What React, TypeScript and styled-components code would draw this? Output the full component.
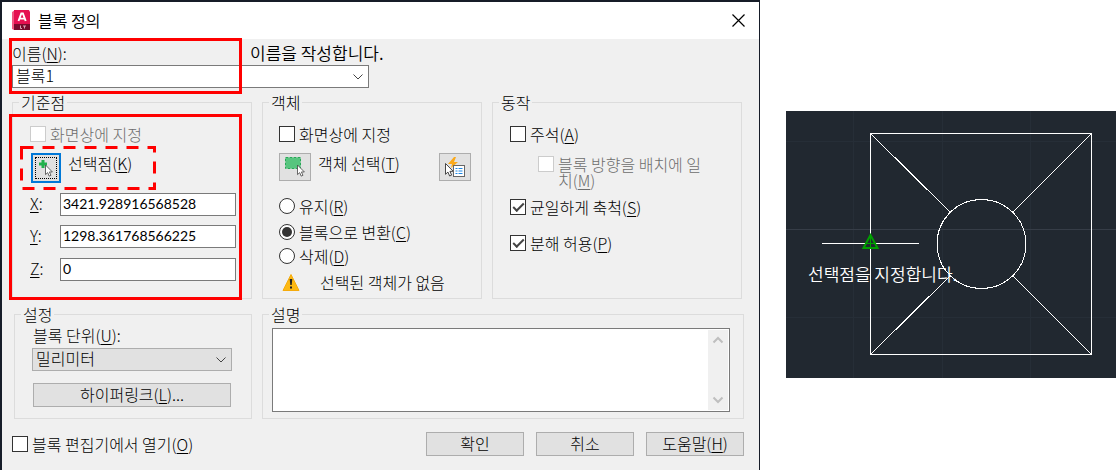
import React from 'react';
import styled, { createGlobalStyle, css } from 'styled-components';

const GlobalStyle = createGlobalStyle`
  *, *::before, *::after { box-sizing: border-box; }
  body {
    margin: 0;
    background: #fff;
    color: #000;
    font: 300 16px/18px "Noto Sans CJK KR", sans-serif;
  }
  button, input, select, textarea { font: inherit; color: inherit; margin: 0; border-radius: 0; }
  u { text-underline-offset: 2px; text-decoration-thickness: 1px; }
`;

const Page = styled.main`
  display: grid;
  grid-template-columns: minmax(760px, 1fr) 330px;
  column-gap: 26px;
  min-height: 100vh;
`;

const Dialog = styled.section`
  display: flex;
  flex-direction: column;
  background: #f0f0f0;
  border: solid #161c28;
  border-width: 2px 1px 0 2px;
`;

const TitleBar = styled.header`
  display: flex;
  align-items: center;
  gap: 6px;
  height: 37px;
  padding: 0 12px 1px 10px;
  background: #fff;
`;

const Title = styled.h1`
  flex: 1;
  margin: 0;
  font-size: 16px;
  font-weight: 350;
`;

const CloseButton = styled.button`
  display: flex;
  padding: 2px;
  border: 0;
  background: none;
`;

const Body = styled.form`
  position: relative;
  display: flex;
  flex-direction: column;
  padding: 5px 15px 14px 10px;
`;

const NameRow = styled.div`
  display: flex;
  align-items: flex-start;
  height: 21px;
`;

const NameLabel = styled.label`
  width: 238px;
`;

const Note = styled.p`
  margin: 0;
  font-size: 17px;
  font-weight: 350;
`;

const SelectBox = styled.div<{ $filled?: boolean }>`
  display: grid;
  align-items: center;
  width: ${p => (p.$filled ? '200px' : '357px')};
  height: 23px;
  border: 1px solid ${p => (p.$filled ? '#adadad' : '#7a7a7a')};
  background: ${p => (p.$filled ? '#e1e1e1' : '#fff')};
  > * { grid-area: 1 / 1; }
  > svg { justify-self: end; margin-right: 4px; pointer-events: none; }
`;

const Select = styled.select`
  appearance: none;
  width: 100%;
  height: 21px;
  padding: 0 24px 3px 3px;
  border: 0;
  background: none;
  line-height: 18px;
`;

const TopGroups = styled.div`
  display: grid;
  grid-template-columns: 240fr 220fr 250fr;
  gap: 10px;
  margin: 5px 2px 6px 0;
`;

const BottomGroups = styled.div`
  display: grid;
  grid-template-columns: 238fr 482fr;
  gap: 10px;
  margin-left: 2px;
`;

const Group = styled.fieldset<{ $inset: number }>`
  min-width: 0;
  margin: 0;
  padding: 0 10px 6px ${p => p.$inset}px;
  border: 1px solid #dcdcdc;
`;

const Legend = styled.legend<{ $inset: number }>`
  margin-left: ${p => 6 - p.$inset}px;
  padding: 0 2px;
`;

const Line = styled.div<{ $top?: number; $height?: number; $indent?: number }>`
  display: flex;
  align-items: center;
  height: ${p => p.$height ?? 16}px;
  margin-top: ${p => p.$top ?? 0}px;
  padding-left: ${p => p.$indent ?? 0}px;
`;

const Choice = styled.label<{ $disabled?: boolean }>`
  display: flex;
  align-items: flex-start;
  gap: 4px;
  line-height: 16px;
  color: ${p => (p.$disabled ? '#6d6d6d' : '#000')};
`;

const WrappedText = styled.span`
  width: 150px;
`;

const markStyle = css`
  appearance: none;
  flex: none;
  display: grid;
  place-items: center;
  width: 16px;
  height: 16px;
  border: 1px solid #333;
  background: #fff;
`;

const CheckInput = styled.input.attrs({ type: 'checkbox' })`
  ${markStyle}
  &:disabled { border-color: #ccc; }
  &:checked::before {
    content: '';
    width: 11px;
    height: 6px;
    margin-bottom: 3px;
    border: solid #444;
    border-width: 0 0 2px 2px;
    transform: rotate(-45deg);
  }
`;

const RadioInput = styled.input.attrs({ type: 'radio' })`
  ${markStyle}
  && { border-radius: 50%; }
  &:checked::before {
    content: '';
    width: 10px;
    height: 10px;
    border-radius: 50%;
    background: #333;
  }
`;

const ToolButton = styled.button<{ $focused?: boolean }>`
  position: relative;
  display: grid;
  place-items: center;
  flex: none;
  width: ${p => (p.$focused ? 30 : 32)}px;
  height: ${p => (p.$focused ? 30 : 28)}px;
  margin-left: ${p => (p.$focused ? 1 : 0)}px;
  padding: 0;
  border: ${p => (p.$focused ? '2px solid #0078d7' : '1px solid #adadad')};
  background: #e1e1e1;
  ${p => p.$focused && css`
    &::after {
      content: '';
      position: absolute;
      inset: 2px;
      border: 1px dotted #000;
    }
  `}
`;

const ToolLabel = styled.label`
  flex: 1;
  align-self: flex-start;
  padding: 1px 0 0 7px;
`;

const AxisLabel = styled.label`
  width: 30px;
  padding-bottom: 3px;
`;

const AxisInput = styled.input`
  width: 176px;
  height: 23px;
  padding: 0 2px 2px;
  border: 1px solid #7a7a7a;
  background: #fff;
  font: 400 14px/18px Lato, sans-serif;
`;

const Status = styled.span`
  margin-left: 20px;
  padding-bottom: 2px;
`;

const FieldLabel = styled.label`
  display: block;
  margin: 3px 0 4px 1px;
`;

const PushButton = styled.button<{ $wide?: boolean }>`
  width: ${p => (p.$wide ? 198 : 98)}px;
  height: 24px;
  padding: 0 0 2px;
  border: 1px solid #adadad;
  background: #e1e1e1;
  line-height: 18px;
`;

const HyperlinkRow = styled.div`
  display: flex;
  margin: 12px 0 4px 1px;
`;

const MemoFrame = styled.div`
  display: flex;
  height: 84px;
  margin: 5px 3px 0 0;
  padding: 1px;
  border: 1px solid #7a7a7a;
  background: #fff;
`;

const Memo = styled.textarea`
  flex: 1;
  min-width: 0;
  padding: 2px;
  border: 0;
  resize: none;
  overflow: hidden;
  background: #fff;
`;

const ScrollTrack = styled.div`
  display: flex;
  flex-direction: column;
  justify-content: space-between;
  align-items: center;
  width: 20px;
  padding: 6px 0;
  background: #f0f0f0;
`;

const ScrollButton = styled.button`
  display: flex;
  padding: 0;
  border: 0;
  background: none;
`;

const Footer = styled.footer`
  display: flex;
  align-items: center;
  gap: 12px;
  margin-top: 13px;
`;

const FooterChoice = styled.div`
  flex: 1;
`;

const Highlight = styled.div<{ $top: number; $height: number }>`
  position: absolute;
  left: 7px;
  top: ${p => p.$top}px;
  width: 233px;
  height: ${p => p.$height}px;
  border: 3px solid #f00;
  pointer-events: none;
`;

const DashedHighlight = styled.svg`
  position: absolute;
  left: 18px;
  top: 107px;
  pointer-events: none;
`;

const Drawing = styled.figure`
  position: relative;
  align-self: start;
  margin: 111px 0 0;
  background: #212830;
  > svg { display: block; }
`;

const Caption = styled.figcaption`
  position: absolute;
  left: 22px;
  top: 154px;
  color: #fff;
  font-size: 17px;
  font-weight: 350;
`;

const Chevron = ({ color = '#444', up = false, width = 1 }: { color?: string; up?: boolean; width?: number }) => (
  <svg width="12" height="8" viewBox="0 0 12 8" fill="none" stroke={color} strokeWidth={width} aria-hidden="true">
    <path d={up ? 'M1.5 6.5 6 2l4.5 4.5' : 'M1.5 1.5 6 6l4.5-4.5'} />
  </svg>
);

const AppLogo = () => (
  <svg width="20" height="21" viewBox="0 0 20 21" aria-hidden="true">
    <path d="M0 2 3 0v14l-1 6-2-1z" fill="#f0587f" />
    <path d="M2 0h15l1 2v13H2z" fill="#e51050" />
    <path d="M2 14h16v6H2z" fill="#780a2c" />
    <path d="M6.500 11 9.300 3.500h1.600L13.700 11M7.800 8.600h4.600" fill="none" stroke="#fff" strokeWidth="1.900" />
    <path d="M8.500 15.500v3h1.500M11 16h3M12.500 16v2.500" fill="none" stroke="#d8a4b4" />
  </svg>
);

const pointer = 'M0 0v12l2.700-2.500 1.900 4.400 2.200-1-1.900-4.200h3.700z';

const PickPointIcon = () => (
  <svg width="24" height="24" viewBox="0 0 24 24" aria-hidden="true">
    <path d="M9 4v8M5 8h8" stroke="#22b14c" strokeWidth="3" />
    <path d={pointer} transform="translate(11.500 9) scale(.8)" fill="#fff" stroke="#444" />
  </svg>
);

const SelectObjectsIcon = () => (
  <svg width="24" height="24" viewBox="0 0 24 24" aria-hidden="true">
    <rect x="3" y="3" width="14" height="10" fill="#56c57e" />
    <rect x="2.500" y="2.500" width="15" height="11" fill="none" stroke="#27a957" strokeDasharray="3 1" />
    <path d={pointer} transform="translate(14.500 10) scale(.8)" fill="#fff" stroke="#444" />
  </svg>
);

const QuickSelectIcon = () => (
  <svg width="24" height="24" viewBox="0 0 24 24" aria-hidden="true">
    <path d="M11 2 5 9h4l-1 4 7-6h-4l2-5z" fill="#fba91a" />
    <path d={pointer} transform="translate(2.500 8.500) scale(.9)" fill="#fff" stroke="#333" />
    <rect x="10.500" y="10.500" width="11" height="11" fill="#fff" stroke="#666" />
    <path d="M12.500 13.500h2M12.500 16h2M12.500 18.500h2M15.500 13.500h4M15.500 16h4M15.500 18.500h4" stroke="#1e88e5" />
  </svg>
);

const WarningIcon = () => (
  <svg width="20" height="19" viewBox="0 0 20 19" aria-hidden="true">
    <path d="M11 1.500 19 17.500h-16z" fill="#fdb913" stroke="#f5ab0c" strokeLinejoin="round" />
    <path d="M9.700 6h2.600l-.6 6h-1.400zM10 13.500h2v2h-2z" fill="#222" />
  </svg>
);

const BlockDrawing = () => (
  <svg width="100%" viewBox="0 0 330 267" fill="none" role="img" aria-label="블록">
    <g shapeRendering="crispEdges">
      <path d="M67.500 0v267M156.500 0v267M244.500 0v267M0 30.500h330M0 206.500h330" stroke="#262e37" />
      <path d="M0 118.500h330" stroke="#363d47" />
      <rect x="84.500" y="22.500" width="221" height="221" stroke="#fff" />
      <path d="M36 132.500h97" stroke="#fff" />
      <path d="M84.500 22.500l80 79M305.500 22.500l-79 79M84.500 243.500l80-79M305.500 243.500l-79-79" stroke="#fff" />
      <circle cx="195.500" cy="133" r="44.500" stroke="#fff" />
    </g>
    <path d="M84.500 124v13M79 132.500h11" stroke="#00a000" />
    <path d="M84.500 124 77.500 137h14z" stroke="#00a000" strokeWidth="2" />
  </svg>
);

const axes = [
  { name: 'X', value: '3421.928916568528', top: 10 },
  { name: 'Y', value: '1298.361768566225', top: 9 },
  { name: 'Z', value: '0', top: 10 },
];

export default function App() {
  return (
    <>
      <GlobalStyle />
      <Page>
        <Dialog aria-labelledby="dialog-title">
          <TitleBar>
            <AppLogo />
            <Title id="dialog-title">블록 정의</Title>
            <CloseButton type="button" aria-label="닫기">
              <svg width="13" height="13" viewBox="0 0 13 13" stroke="#000" strokeWidth="1.200" aria-hidden="true">
                <path d="M.5.5l12 12M12.500.5l-12 12" />
              </svg>
            </CloseButton>
          </TitleBar>
          <Body onSubmit={e => e.preventDefault()}>
            <NameRow>
              <NameLabel htmlFor="name">이름(<u>N</u>):</NameLabel>
              <Note>이름을 작성합니다.</Note>
            </NameRow>
            <SelectBox>
              <Select id="name"><option>블록1</option></Select>
              <Chevron />
            </SelectBox>

            <TopGroups>
              <Group $inset={17}>
                <Legend $inset={17}>기준점</Legend>
                <Line $top={15}>
                  <Choice $disabled><CheckInput disabled /><span>화면상에 지정</span></Choice>
                </Line>
                <Line $top={11} $height={30}>
                  <ToolButton type="button" id="pick" $focused><PickPointIcon /></ToolButton>
                  <ToolLabel htmlFor="pick">선택점(<u>K</u>)</ToolLabel>
                </Line>
                {axes.map(a => (
                  <Line key={a.name} $top={a.top} $height={23}>
                    <AxisLabel htmlFor={a.name}><u>{a.name}</u>:</AxisLabel>
                    <AxisInput id={a.name} defaultValue={a.value} />
                  </Line>
                ))}
              </Group>

              <Group $inset={16}>
                <Legend $inset={16}>객체</Legend>
                <Line $top={15}>
                  <Choice><CheckInput /><span>화면상에 지정</span></Choice>
                </Line>
                <Line $top={11} $height={28}>
                  <ToolButton type="button" id="objects"><SelectObjectsIcon /></ToolButton>
                  <ToolLabel htmlFor="objects">객체 선택(<u>T</u>)</ToolLabel>
                  <ToolButton type="button" aria-label="신속 선택"><QuickSelectIcon /></ToolButton>
                </Line>
                <Line $top={17}>
                  <Choice><RadioInput name="mode" /><span>유지(<u>R</u>)</span></Choice>
                </Line>
                <Line $top={10}>
                  <Choice><RadioInput name="mode" defaultChecked /><span>블록으로 변환(<u>C</u>)</span></Choice>
                </Line>
                <Line $top={8}>
                  <Choice><RadioInput name="mode" /><span>삭제(<u>D</u>)</span></Choice>
                </Line>
                <Line $top={9} $height={19} $indent={1}>
                  <WarningIcon />
                  <Status>선택된 객체가 없음</Status>
                </Line>
              </Group>

              <Group $inset={17}>
                <Legend $inset={17}>동작</Legend>
                <Line $top={15}>
                  <Choice><CheckInput /><span>주석(<u>A</u>)</span></Choice>
                </Line>
                <Line $top={14} $height={32} $indent={28}>
                  <Choice $disabled>
                    <CheckInput disabled />
                    <WrappedText>블록 방향을 배치에 일치(<u>M</u>)</WrappedText>
                  </Choice>
                </Line>
                <Line $top={11}>
                  <Choice><CheckInput defaultChecked /><span>균일하게 축척(<u>S</u>)</span></Choice>
                </Line>
                <Line $top={20}>
                  <Choice><CheckInput defaultChecked /><span>분해 허용(<u>P</u>)</span></Choice>
                </Line>
              </Group>
            </TopGroups>

            <BottomGroups>
              <Group $inset={17}>
                <Legend $inset={17}>설정</Legend>
                <FieldLabel htmlFor="unit">블록 단위(<u>U</u>):</FieldLabel>
                <SelectBox $filled>
                  <Select id="unit"><option>밀리미터</option></Select>
                  <Chevron />
                </SelectBox>
                <HyperlinkRow>
                  <PushButton type="button" $wide>하이퍼링크(<u>L</u>)...</PushButton>
                </HyperlinkRow>
              </Group>
              <Group $inset={9}>
                <Legend $inset={9}>설명</Legend>
                <MemoFrame>
                  <Memo aria-label="설명" />
                  <ScrollTrack>
                    <ScrollButton type="button" aria-label="위로"><Chevron up color="#bfbfbf" width={2} /></ScrollButton>
                    <ScrollButton type="button" aria-label="아래로"><Chevron color="#bfbfbf" width={2} /></ScrollButton>
                  </ScrollTrack>
                </MemoFrame>
              </Group>
            </BottomGroups>

            <Footer>
              <FooterChoice>
                <Choice><CheckInput /><span>블록 편집기에서 열기(<u>O</u>)</span></Choice>
              </FooterChoice>
              <PushButton type="submit">확인</PushButton>
              <PushButton type="button">취소</PushButton>
              <PushButton type="button">도움말(<u>H</u>)</PushButton>
            </Footer>

            <Highlight $top={-1} $height={56} />
            <Highlight $top={75} $height={186} />
            <DashedHighlight width="136" height="44" fill="none" aria-hidden="true">
              <rect x="1.500" y="1.500" width="133" height="41" stroke="#f00" strokeWidth="3" strokeDasharray="12 9" />
            </DashedHighlight>
          </Body>
        </Dialog>

        <Drawing>
          <BlockDrawing />
          <Caption>선택점을 지정합니다.</Caption>
        </Drawing>
      </Page>
    </>
  );
}
